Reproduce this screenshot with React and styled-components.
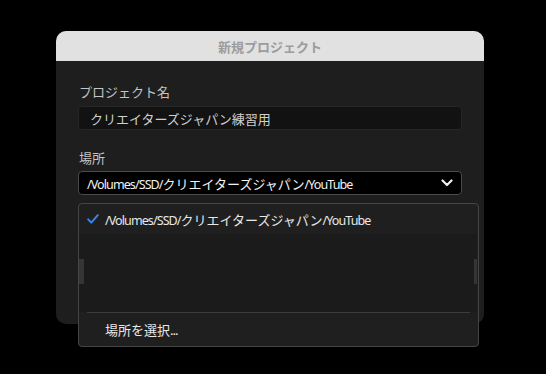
import styled, { createGlobalStyle } from 'styled-components';

const GlobalStyle = createGlobalStyle`
  html, body {
    margin: 0;
    background: #000;
  }
  body {
    font-family: "Noto Sans CJK JP", "Noto Sans", sans-serif;
  }
`;

const Stage = styled.div`
  width: 546px;
  height: 374px;
  padding: 31px 0 0 56px;
  box-sizing: border-box;
  overflow: hidden;
`;

const Dialog = styled.div`
  width: 428px;
  height: 293px;
  border-radius: 10px;
  background: #1e1e1e;
  display: flex;
  flex-direction: column;
`;

const TitleBar = styled.div`
  height: 30px;
  flex: none;
  background: #e1e1e1;
  border-radius: 10px 10px 0 0;
  display: flex;
  align-items: center;
  justify-content: center;
  color: #9c9c9c;
  font-size: 13px;
  font-weight: 700;
`;

const Body = styled.div`
  padding: 22px 22px 0 22px;
  display: flex;
  flex-direction: column;
`;

const Label = styled.div`
  color: #c4c4c4;
  font-size: 13px;
  line-height: 18px;
  margin-bottom: ${(p) => p.$mb || 5}px;
  padding-left: 1px;
`;

const Field = styled.div`
  height: 24px;
  box-sizing: border-box;
  width: 384px;
  border-radius: 4px;
  display: flex;
  align-items: center;
  font-size: 13px;
  background: ${(p) => (p.$dark ? '#000' : '#121212')};
  border: 1px solid ${(p) => (p.$dark ? '#4a4a4a' : '#262626')};
  color: ${(p) => (p.$dark ? '#f2f2f2' : '#cfcfcf')};
  padding: ${(p) => (p.$dark ? '0 8px 0 8px' : '0 11px')};
  margin-bottom: ${(p) => p.$mb || 0}px;
  justify-content: space-between;
`;

const Latin = styled.span`
  font-family: "Noto Sans", sans-serif;
  font-size: 12.5px;
  letter-spacing: -0.9px;
`;

const SelectWrap = styled.div`
  position: relative;
`;

const Menu = styled.div`
  position: absolute;
  top: 32px;
  left: 0;
  width: 401px;
  height: 144px;
  box-sizing: border-box;
  background: #1f1f1f;
  border: 1px solid #454545;
  border-radius: 4px;
  display: flex;
  flex-direction: column;
  z-index: 2;
`;

const Item = styled.div`
  display: flex;
  align-items: center;
  gap: 6px;
  height: ${(p) => p.$h}px;
  padding-left: 8px;
  color: #e8e8e8;
  font-size: 13px;
  flex: none;
`;

const CheckSlot = styled.span`
  width: 12px;
  display: flex;
  align-items: center;
`;

const Gap = styled.div`
  flex: 1;
  margin-right: 1px;
  background: #1b1b1b;
  display: flex;
  align-items: flex-start;
  justify-content: space-between;
  padding-top: 25px;
`;

const Ghost = styled.span`
  width: ${(p) => p.$w}px;
  height: 25px;
  background: #353535;
`;

const Divider = styled.div`
  height: 1px;
  background: #3c3c3c;
  margin: 0 8px;
  flex: none;
`;

const Dots = styled.span`
  letter-spacing: -1px;
  font-family: "Noto Sans", sans-serif;
`;

const Check = () => (
  <svg width="12" height="10" viewBox="0 0 12 10">
    <path d="M1.2 5.4 L4.3 8.6 L10.8 1.2" fill="none" stroke="#3f82ea" strokeWidth="2" strokeLinecap="round" strokeLinejoin="round" />
  </svg>
);

const Chevron = () => (
  <svg width="12" height="8" viewBox="0 0 12 8">
    <path d="M1.5 1.5 L6 6 L10.5 1.5" fill="none" stroke="#f2f2f2" strokeWidth="2.2" strokeLinecap="round" strokeLinejoin="round" />
  </svg>
);

const PathText = () => (
  <span>
    <Latin>/Volumes/SSD/</Latin>クリエイターズジャパン<Latin>/YouTube</Latin>
  </span>
);

export default function App() {
  return (
    <>
      <GlobalStyle />
      <Stage>
        <Dialog>
          <TitleBar>新規プロジェクト</TitleBar>
          <Body>
            <Label>プロジェクト名</Label>
            <Field $mb={19}>クリエイターズジャパン練習用</Field>
            <Label $mb={4}>場所</Label>
            <SelectWrap>
              <Field $dark>
                <PathText />
                <Chevron />
              </Field>
              <Menu>
                <Item $h={30}>
                  <CheckSlot>
                    <Check />
                  </CheckSlot>
                  <PathText />
                </Item>
                <Gap>
                  <Ghost $w={5} />
                  <Ghost $w={3} />
                </Gap>
                <Divider />
                <Item $h={33}>
                  <CheckSlot />
                  <span>
                    場所を選択<Dots>...</Dots>
                  </span>
                </Item>
              </Menu>
            </SelectWrap>
          </Body>
        </Dialog>
      </Stage>
    </>
  );
}
